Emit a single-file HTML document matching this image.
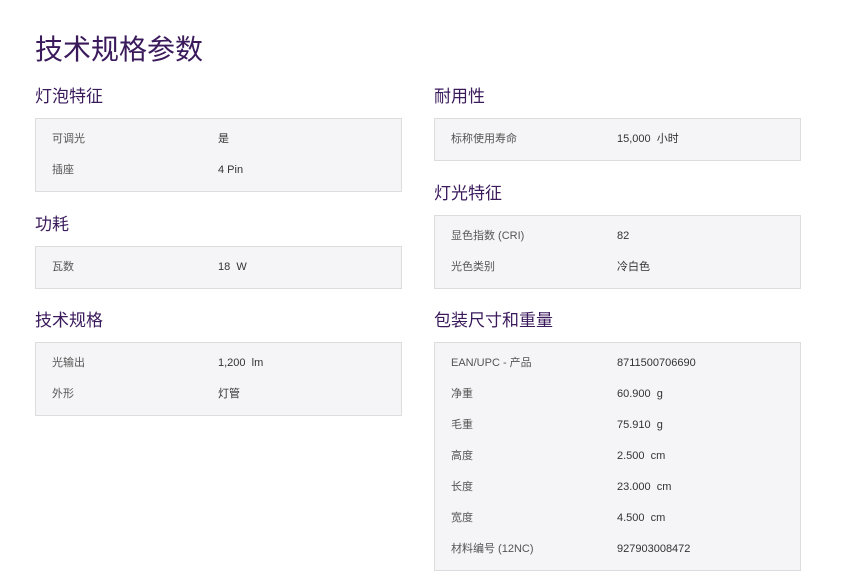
<!DOCTYPE html>
<html><head><meta charset="utf-8"><style>
body{margin:0;background:#fff;font-family:"Liberation Sans","Noto Sans CJK SC",sans-serif;width:841px;height:587px;position:relative;overflow:hidden}
h1{position:absolute;left:35px;top:31px;margin:0;font-size:28px;font-weight:normal;color:#3b1a5c;line-height:38px}
.h{position:absolute;margin:0;font-size:17px;font-weight:normal;color:#3b1a5c;line-height:22px}
.b{position:absolute;width:365px;border:1px solid #ddd;background:#f5f5f7;padding:5px 0 5px}
.r{height:31px;line-height:31px;font-size:11px;position:relative}
.r span{position:absolute;left:16px;color:#555}
.r b{position:absolute;left:182px;font-weight:normal;color:#333}
</style></head><body>
<h1>技术规格参数</h1>
<div class="h" style="left:35px;top:86px">灯泡特征</div>
<div class="b" style="left:35px;top:118px"><div class="r"><span>可调光</span><b>是</b></div><div class="r"><span>插座</span><b>4 Pin</b></div></div>
<div class="h" style="left:35px;top:214px">功耗</div>
<div class="b" style="left:35px;top:246px"><div class="r"><span>瓦数</span><b>18&nbsp; W</b></div></div>
<div class="h" style="left:35px;top:310px">技术规格</div>
<div class="b" style="left:35px;top:342px"><div class="r"><span>光输出</span><b>1,200&nbsp; lm</b></div><div class="r"><span>外形</span><b>灯管</b></div></div>
<div class="h" style="left:434px;top:86px">耐用性</div>
<div class="b" style="left:434px;top:118px"><div class="r"><span>标称使用寿命</span><b>15,000&nbsp; 小时</b></div></div>
<div class="h" style="left:434px;top:183px">灯光特征</div>
<div class="b" style="left:434px;top:215px"><div class="r"><span>显色指数 (CRI)</span><b>82</b></div><div class="r"><span>光色类别</span><b>冷白色</b></div></div>
<div class="h" style="left:434px;top:310px">包装尺寸和重量</div>
<div class="b" style="left:434px;top:342px">
<div class="r"><span>EAN/UPC - 产品</span><b>8711500706690</b></div>
<div class="r"><span>净重</span><b>60.900&nbsp; g</b></div>
<div class="r"><span>毛重</span><b>75.910&nbsp; g</b></div>
<div class="r"><span>高度</span><b>2.500&nbsp; cm</b></div>
<div class="r"><span>长度</span><b>23.000&nbsp; cm</b></div>
<div class="r"><span>宽度</span><b>4.500&nbsp; cm</b></div>
<div class="r"><span>材料编号 (12NC)</span><b>927903008472</b></div>
</div>
</body></html>
